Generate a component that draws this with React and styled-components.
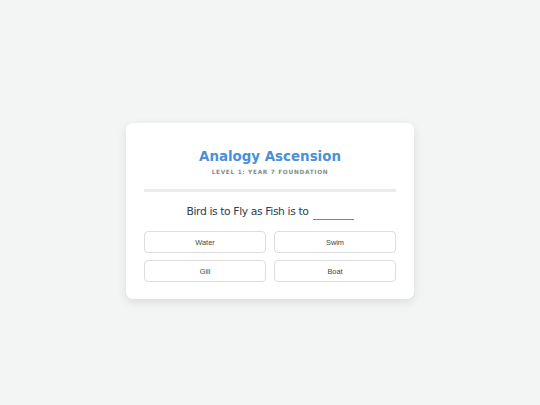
import React from 'react';
import styled, { createGlobalStyle } from 'styled-components';

const GlobalStyle = createGlobalStyle`
  html, body {
    margin: 0;
    padding: 0;
    background: #f3f4f4;
  }
  * {
    box-sizing: border-box;
  }
`;

const Page = styled.div`
  width: 540px;
  height: 405px;
  display: flex;
  justify-content: center;
  align-items: flex-start;
  padding-top: 123px;
`;

const Card = styled.div`
  width: 288px;
  background: #ffffff;
  border-radius: 7px;
  box-shadow: 0 3px 10px rgba(0, 0, 0, 0.1);
  padding: 25px 18px 17px;
  text-align: center;
  font-family: 'DejaVu Sans', Verdana, sans-serif;
`;

const Title = styled.h1`
  margin: 0;
  font-size: 13.4px;
  font-weight: bold;
  color: #4a90d9;
  line-height: 17px;
`;

const Subtitle = styled.div`
  margin-top: 3px;
  font-size: 5.8px;
  font-weight: bold;
  letter-spacing: 0.7px;
  text-transform: uppercase;
  color: #7f8c8d;
  line-height: 8px;
`;

const Divider = styled.hr`
  margin: 13px 0 0;
  border: none;
  height: 3px;
  background: #ebebeb;
`;

const Question = styled.p`
  margin: 12px 0 0;
  font-size: 10.8px;
  letter-spacing: -0.4px;
  color: #2c3e50;
  line-height: 15px;
`;

const Blank = styled.span`
  display: inline-block;
  width: 41px;
  margin-left: 1px;
  border-bottom: 1px solid #4a90d9;
  vertical-align: baseline;
`;

const Options = styled.div`
  margin-top: 11px;
  display: grid;
  grid-template-columns: 1fr 1fr;
  gap: 7px 8px;
`;

const Option = styled.button`
  height: 22px;
  background: #ffffff;
  border: 1px solid #dddddd;
  border-radius: 4px;
  font-family: 'Liberation Sans', Arial, sans-serif;
  font-size: 7.4px;
  color: #444444;
  cursor: pointer;
  padding: 0;
`;

const options = ['Water', 'Swim', 'Gill', 'Boat'];

export default function App() {
  return (
    <>
      <GlobalStyle />
      <Page>
        <Card>
          <Title>Analogy Ascension</Title>
          <Subtitle>Level 1: Year 7 Foundation</Subtitle>
          <Divider />
          <Question>
            Bird is to Fly as Fish is to <Blank>&nbsp;</Blank>
          </Question>
          <Options>
            {options.map((o) => (
              <Option key={o}>{o}</Option>
            ))}
          </Options>
        </Card>
      </Page>
    </>
  );
}
